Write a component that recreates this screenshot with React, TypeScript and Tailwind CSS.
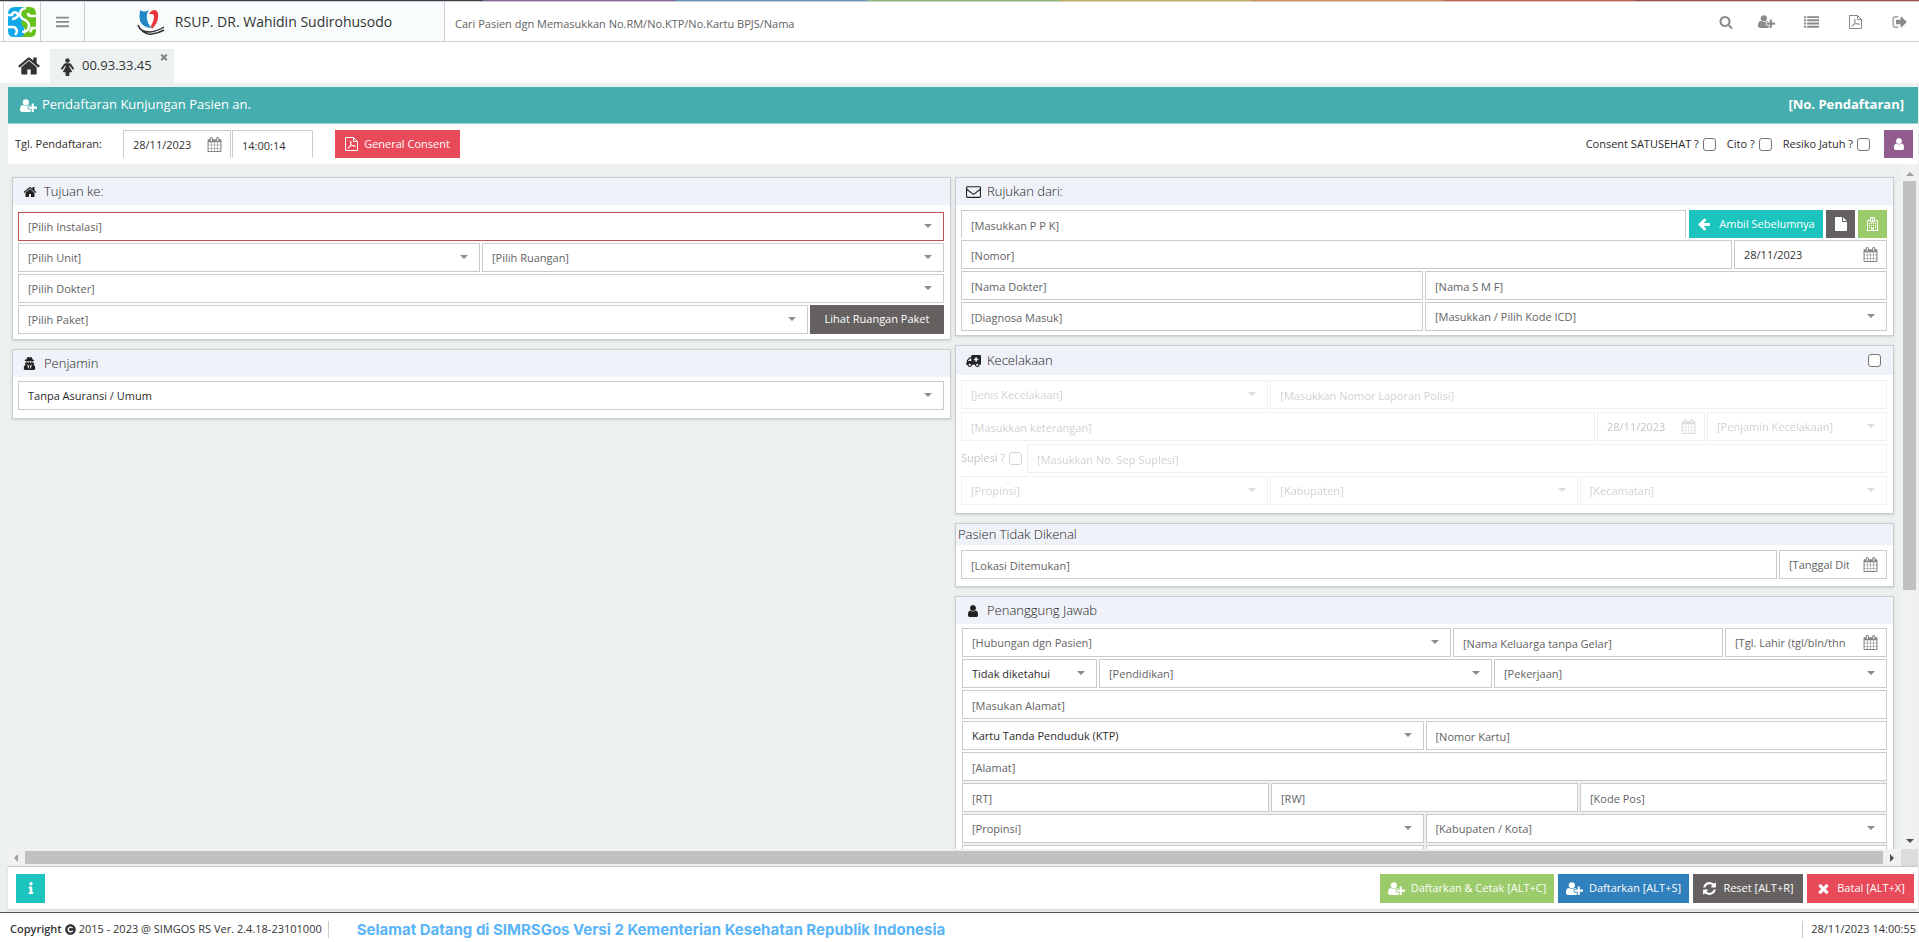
import { ReactNode } from "react";
import { clsx } from "clsx";
import { FaAmbulance, FaCopyright, FaInfo, FaUserSecret } from "react-icons/fa";

const ICONS = {
  calendar:
    "M192 1664h288v-288h-288v288zm352 0h320v-288h-320v288zm-352-352h288v-320h-288v320zm352 0h320v-320h-320v320zm-352-384h288v-288h-288v288zm736 736h320v-288h-320v288zm-384-736h320v-288h-320v288zm768 736h288v-288h-288v288zm-384-352h320v-320h-320v320zm-352-864v-288q0-13-9.500-22.500t-22.500-9.500h-64q-13 0-22.500 9.500t-9.500 22.500v288q0 13 9.500 22.500t22.500 9.500h64q13 0 22.500-9.500t9.500-22.500zm736 864h288v-320h-288v320zm-384-384h320v-288h-320v288zm384 0h288v-288h-288v288zm32-480v-288q0-13-9.500-22.500t-22.500-9.500h-64q-13 0-22.500 9.500t-9.500 22.500v288q0 13 9.500 22.500t22.500 9.500h64q13 0 22.500-9.500t9.500-22.500zm384-64v1280q0 52-38 90t-90 38h-1408q-52 0-90-38t-38-90v-1280q0-52 38-90t90-38h128v-96q0-66 47-113t113-47h64q66 0 113 47t47 113v96h384v-96q0-66 47-113t113-47h64q66 0 113 47t47 113v96h128q52 0 90 38t38 90z",
  signOut:
    "M704 1440q0 4 1 20t.5 26.500-3 23.500-10 19.500-20.500 6.500h-320q-119 0-203.500-84.500t-84.500-203.500v-704q0-119 84.500-203.500t203.500-84.500h320q13 0 22.500 9.500t9.500 22.500q0 4 1 20t.5 26.500-3 23.500-10 19.500-20.500 6.500h-320q-66 0-113 47t-47 113v704q0 66 47 113t113 47h312l11.500 1 11.500 3 8 5.500 7 9 2 13.500zm928-544q0 26-19 45l-544 544q-19 19-45 19t-45-19-19-45v-288h-448q-26 0-45-19t-19-45v-384q0-26 19-45t45-19h448v-288q0-26 19-45t45-19 45 19l544 544q19 19 19 45z",
  home: "M1472 992v480q0 26-19 45t-45 19h-384v-384h-256v384h-384q-26 0-45-19t-19-45v-480q0-1 .5-3t.5-3l575-474 575 474q1 2 1 6zm223-69l-62 74q-8 9-21 11h-3q-13 0-21-7l-692-577-692 577q-12 8-24 7-13-2-21-11l-62-74q-8-10-7-23.500t11-21.500l719-599q32-26 76-26t76 26l244 204v-195q0-14 9-23t23-9h192q14 0 23 9t9 23v408l219 182q10 8 11 21.500t-7 23.500z",
  search:
    "M1216 832q0-185-131.500-316.500t-316.500-131.500-316.500 131.500-131.500 316.500 131.500 316.500 316.500 131.500 316.500-131.500 131.500-316.500zm512 832q0 52-38 90t-90 38q-54 0-90-38l-343-342q-179 124-399 124-143 0-273.500-55.500t-225-150-150-225-55.500-273.500 55.500-273.500 150-225 225-150 273.500-55.500 273.500 55.500 225 150 150 225 55.500 273.500q0 220-124 399l343 343q37 37 37 90z",
  user: "M1536 1399q0 109-62.500 187t-150.500 78h-854q-88 0-150.500-78t-62.500-187q0-85 8.500-160.500t31.500-152 58.500-131 94-89 134.500-34.500q131 128 313 128t313-128q76 0 134.500 34.500t94 89 58.500 131 31.500 152 8.500 160.500zm-256-887q0 159-112.500 271.500t-271.500 112.500-271.500-112.500-112.500-271.500 112.500-271.500 271.500-112.500 271.500 112.500 112.500 271.500z",
  refresh:
    "M1639 1056q0 5-1 7-64 268-268 434.500t-478 166.500q-146 0-282.500-55t-243.500-157l-129 129q-19 19-45 19t-45-19-19-45v-448q0-26 19-45t45-19h448q26 0 45 19t19 45-19 45l-137 137q71 66 161 102t187 36q134 0 250-65t186-179q11-17 53-117 8-23 30-23h192q13 0 22.500 9.500t9.500 22.500zm25-800v448q0 26-19 45t-45 19h-448q-26 0-45-19t-19-45 19-45l138-138q-148-137-349-137-134 0-250 65t-186 179q-11 17-53 117-8 23-30 23h-199q-13 0-22.500-9.500t-9.500-22.500v-7q65-268 270-434.500t480-166.500q146 0 284 55.500t245 156.500l130-129q19-19 45-19t45 19 19 45z",
  times:
    "M1490 1322q0 40-28 68l-136 136q-28 28-68 28t-68-28l-294-294-294 294q-28 28-68 28t-68-28l-136-136q-28-28-28-68t28-68l294-294-294-294q-28-28-28-68t28-68l136-136q28-28 68-28t68 28l294 294 294-294q28-28 68-28t68 28l136 136q28 28 28 68t-28 68l-294 294 294 294q28 28 28 68z",
  arrowLeft:
    "M1664 896v128q0 53-32.500 90.500t-84.500 37.500h-704l293 294q38 36 38 90t-38 90l-75 76q-37 37-90 37-52 0-91-37l-651-652q-37-37-37-90 0-52 37-91l651-650q38-38 91-38 52 0 90 38l75 74q38 38 38 91t-38 91l-293 293h704q52 0 84.500 37.500t32.500 90.500z",
  file: "M1152 512v-472q22 14 36 28l408 408q14 14 28 36h-472zm-128 32q0 40 28 68t68 28h544v1056q0 40-28 68t-68 28h-1344q-40 0-68-28t-28-68v-1600q0-40 28-68t68-28h800v544z",
  envelope:
    "M1664 1504v-768q-32 36-69 66-268 206-426 338-51 43-83 67t-86.500 48.500-102.500 24.500h-2q-48 0-102.500-24.500t-86.500-48.500-83-67q-158-132-426-338-37-30-69-66v768q0 13 9.500 22.500t22.500 9.500h1472q13 0 22.500-9.500t9.500-22.500zm0-1051v-24.500l-.5-13-3-12.500-5.500-9-9-7.500-14-2.500h-1472q-13 0-22.500 9.500t-9.500 22.500q0 168 147 284 193 152 401 317 6 5 35 29.500t46 37.500 44.500 31.500 50.500 27.500 43 9h2q20 0 43-9t50.500-27.500 44.500-31.500 46-37.500 35-29.500q208-165 401-317 54-43 100.500-115.500t46.500-131.500zm128-37v1088q0 66-47 113t-113 47h-1472q-66 0-113-47t-47-113v-1088q0-66 47-113t113-47h1472q66 0 113 47t47 113z",
  list: "M0 256h256v224h-256zM384 256h1408v224h-1408zM0 640h256v224h-256zM384 640h1408v224h-1408zM0 1024h256v224h-256zM384 1024h1408v224h-1408zM0 1408h256v224h-256zM384 1408h1408v224h-1408z",
  bars: "M128 320h1536v224h-1536zM128 832h1536v224h-1536zM128 1344h1536v224h-1536z",
};

function Icon({ name, className }: { name: keyof typeof ICONS; className?: string }) {
  return (
    <svg viewBox="0 0 1792 1792" fill="currentColor" aria-hidden="true" className={clsx("shrink-0", className)}>
      <path d={ICONS[name]} />
    </svg>
  );
}

function UserPlus({ className }: { className?: string }) {
  return (
    <svg viewBox="0 0 2048 1792" fill="currentColor" aria-hidden="true" className={clsx("shrink-0", className)}>
      <path d="M704 896q-159 0-271.500-112.500t-112.500-271.500 112.500-271.500 271.500-112.500 271.500 112.500 112.500 271.500-112.500 271.500-271.500 112.500zm960 128h352q13 0 22.500 9.500t9.500 22.500v192q0 13-9.500 22.500t-22.500 9.500h-352v352q0 13-9.500 22.500t-22.500 9.500h-192q-13 0-22.500-9.500t-9.500-22.500v-352h-352q-13 0-22.500-9.500t-9.500-22.500v-192q0-13 9.500-22.500t22.500-9.500h352v-352q0-13 9.500-22.500t22.500-9.500h192q13 0 22.500 9.500t9.500 22.500v352zm-736 224q0 52 38 90t90 38h256v238q-68 50-171 50h-874q-121 0-194-69t-73-190q0-53 3.500-103.500t14-109 26.500-108.500 43-97.500 62-81 85.500-53.500 111.500-20q19 0 39 17 79 61 154.500 91.500t164.500 30.500 164.500-30.500 154.500-91.500q20-17 39-17 132 0 217 96h-223q-52 0-90 38t-38 90v192z" />
    </svg>
  );
}

function FemaleIcon({ className }: { className?: string }) {
  return (
    <svg viewBox="0 0 1280 1792" fill="currentColor" aria-hidden="true" className={clsx("shrink-0", className)}>
      <path d="M1280 1056q0 40-28 68t-68 28q-51 0-80-43l-227-341h-45v132l247 411q9 15 9 33 0 26-19 45t-45 19h-192v272q0 46-33 79t-79 33h-160q-46 0-79-33t-33-79v-272h-192q-26 0-45-19t-19-45q0-18 9-33l247-411v-132h-45l-227 341q-29 43-80 43-40 0-68-28t-28-68q0-29 16-53l256-384q73-107 176-107h384q103 0 176 107l256 384q16 24 16 53zM864 256q0 93-65.500 158.500t-158.500 65.500-158.500-65.500-65.500-158.500 65.500-158.500 158.500-65.500 158.500 65.500 65.500 158.500z" />
    </svg>
  );
}

function PdfIcon({ className }: { className?: string }) {
  return (
    <svg viewBox="0 0 13 14" fill="none" stroke="currentColor" aria-hidden="true" className={clsx("shrink-0", className)}>
      <path d="M.5.500h8l4 4v9H.5zM8.500.500v4h4" />
      <path d="M3 11.500q1-.2 2-2.300 1.300-2.700 1-4.700-.4-.8-.7 0 0 2.500 1.700 3.900 1.500 1.200 3.300 1 .4-.6-.6-.8-2.500-.2-5 .8-1.900.9-1.700 2.100z" strokeWidth=".8" />
    </svg>
  );
}

function HospitalIcon() {
  return (
    <svg viewBox="0 0 13 14" fill="none" stroke="currentColor" aria-hidden="true" className="h-[14px] w-[13px]">
      <path d="M4 3.500H1.500v10h10v-10H9M.5 13.500h12" />
      <path d="M4.500 5V.500h4V5z" />
      <path d="M6.500 1.500v3M5.500 3h2" />
      <path d="M3 6.500h7M3 8.500h7M3 10.500h7" strokeDasharray="1 1" />
      <path d="M5.500 13.500v-2h2v2" />
    </svg>
  );
}

function SimgosLogo() {
  return (
    <svg viewBox="0 0 28 30" aria-hidden="true" className="h-[30px] w-7">
      <path fill="#12a9ea" d="M7 0h9v30H6q-6 0-6-6V7q0-7 7-7z" />
      <path fill="#66c21a" d="M16 0h6q6 0 6 7v17q0 6-6 6h-9q4-2 4-6t-3-5l-1-5 5-1-3-3q-3-2-3-5 0-4 4-5z" />
      <path
        d="M18 1q-6 1-6 6 0 4 5 6 4 2 4 6 0 6-7 6M0 8h4q1-4 5-2 2 2 0 4-2 2-5 2M28 21h-4q-1 3-2 4M28 9h-5q-3 0-3-3M0 20h5q3 0 4 4 0 2-2 4"
        fill="none"
        stroke="#fff"
        strokeWidth="2.500"
      />
    </svg>
  );
}

function HospitalLogo() {
  return (
    <svg viewBox="0 0 28 26" aria-hidden="true" className="h-[26px] w-7">
      <path d="M3 1q4 3 9 0-3 4-2 9 1 6 5 9-9 0-12-7-1-5 0-11z" fill="#1f87c4" />
      <path d="M12 5q2-4 6-4 4 1 3 8-1 6-6 11-1-2-1-3 3-5 3-9 0-3-2-3t-3 0z" fill="#e8353b" />
      <path d="M1 16q2 7 12 7 8-1 14-5M5 22q5 4 10 3 7-1 12-4" fill="none" stroke="#333" strokeWidth="1.500" />
    </svg>
  );
}

function Caret() {
  return (
    <svg viewBox="0 0 8 4" fill="#8c8c8c" aria-hidden="true" className="pointer-events-none absolute top-3 right-3 h-1 w-2">
      <path d="M0 0h8l-4 4z" />
    </svg>
  );
}

const box = "h-[29px] border bg-white";
const gray = "border-[#cbcbcb]";

function SelectField({
  label,
  value,
  className = "flex-1",
  invalid,
  disabled,
}: {
  label: string;
  value?: string;
  className?: string;
  invalid?: boolean;
  disabled?: boolean;
}) {
  return (
    <div className={clsx("relative min-w-0", className)}>
      <select
        aria-label={label}
        disabled={disabled}
        className={clsx(
          "block w-full appearance-none pt-0.5 pr-7 pl-[9px] opacity-100",
          box,
          invalid ? "border-[#c0564f]" : gray,
          value ? "text-[#2b2b2b]" : "text-[#636363]",
        )}
      >
        <option>{value ?? label}</option>
      </select>
      <Caret />
    </div>
  );
}

function TextField({
  label,
  className = "flex-1",
  disabled,
}: {
  label: string;
  className?: string;
  disabled?: boolean;
}) {
  return (
    <div className={clsx("min-w-0", className)}>
      <input
        type="text"
        aria-label={label}
        placeholder={label}
        disabled={disabled}
        className={clsx("block w-full px-[9px] pt-px placeholder:text-[#636363]", box, gray)}
      />
    </div>
  );
}

function DateField({
  label,
  value,
  className,
  disabled,
}: {
  label: string;
  value?: string;
  className?: string;
  disabled?: boolean;
}) {
  return (
    <div className={clsx("flex items-center pr-2 pl-[9px]", box, gray, className)}>
      <input
        type="text"
        aria-label={label}
        placeholder={label}
        defaultValue={value}
        disabled={disabled}
        className="mr-[14px] w-0 flex-1 pt-0.5 text-[#333] placeholder:text-[#636363]"
      />
      <button type="button" aria-label={`Kalender ${label}`} disabled={disabled} className="text-[#858585]">
        <Icon name="calendar" className="size-[15px]" />
      </button>
    </div>
  );
}

const tick = "size-[13px] shrink-0 appearance-none rounded-[3px] border border-[#767676] bg-white";

function Check({ label }: { label: string }) {
  return (
    <label className="flex items-center gap-1 text-[#2b2b2b]">
      {label}
      <input type="checkbox" className={tick} />
    </label>
  );
}

function Panel({
  title,
  icon,
  extra,
  headClass = "h-[27px] pl-[10px]",
  bodyClass = "pl-[5px]",
  children,
}: {
  title: string;
  icon?: ReactNode;
  extra?: ReactNode;
  headClass?: string;
  bodyClass?: string;
  children: ReactNode;
}) {
  return (
    <section className="border border-[#c9cecd] bg-white shadow-sm">
      <header className={clsx("flex items-center bg-[#eff2f8] pr-3 text-[#222]", headClass)}>
        {icon && <span className="flex w-[21px] items-center">{icon}</span>}
        <h2 className="flex-1 text-[13px] font-light">{title}</h2>
        {extra}
      </header>
      <div className={clsx("flex flex-col pr-1.5", bodyClass)}>{children}</div>
    </section>
  );
}

function Row({ children }: { children: ReactNode }) {
  return <div className="flex items-center gap-0.5">{children}</div>;
}

function ActionButton({ icon, label, className }: { icon?: ReactNode; label?: string; className: string }) {
  return (
    <button type="button" className={clsx("flex shrink-0 items-center justify-center gap-1.5 text-white", className)}>
      {icon}
      {label}
    </button>
  );
}

function TopBar() {
  return (
    <>
      <div className="flex h-px shrink-0">
        <i className="w-[483px] bg-[#3e3d49]" />
        <i className="flex-1 bg-[#83629b]" />
        <i className="flex-1 bg-[#6394c4]" />
        <i className="flex-1 bg-[#84bb6c]" />
        <i className="flex-1 bg-[#c9b04f]" />
        <i className="flex-1 bg-[#d38d4c]" />
        <i className="flex-1 bg-[#c9604f]" />
        <i className="w-[284px] bg-[#a9474d]" />
      </div>
      <div className="flex h-[41px] shrink-0 border-y border-[#cbcdce] bg-white pl-[3px]">
        <a href="#" aria-label="SIMGOS" className="flex w-[38px] items-center justify-center border-x border-[#cbcdce]">
          <SimgosLogo />
        </a>
        <button type="button" aria-label="Menu" className="flex w-[44px] items-center justify-center border-r border-[#cbcdce] bg-[#f8fcfd] text-[#8a8a8a]">
          <Icon name="bars" className="size-[15px]" />
        </button>
        <div className="flex w-[360px] items-center justify-center gap-[10px] border-r border-[#cbcdce] bg-[#f8fcfd]">
          <HospitalLogo />
          <span className="text-[14px] text-[#333]">RSUP. DR. Wahidin Sudirohusodo</span>
        </div>
        <input
          type="search"
          aria-label="Cari pasien"
          placeholder="Cari Pasien dgn Memasukkan No.RM/No.KTP/No.Kartu BPJS/Nama"
          className="flex-1 px-[10px] pt-1.5 placeholder:text-[#636363]"
        />
        <nav className="flex items-center gap-[29px] pr-[11px] text-[#8a8a8a]">
          <button type="button" aria-label="Cari" className="-mr-1">
            <Icon name="search" className="size-[14px]" />
          </button>
          <button type="button" aria-label="Pasien baru">
            <UserPlus className="h-[15px] w-[17px]" />
          </button>
          <button type="button" aria-label="Daftar">
            <Icon name="list" className="size-[15px]" />
          </button>
          <button type="button" aria-label="PDF" className="px-px">
            <PdfIcon className="h-[14px] w-[13px]" />
          </button>
          <button type="button" aria-label="Keluar">
            <Icon name="signOut" className="size-4" />
          </button>
        </nav>
      </div>
    </>
  );
}

function TabBar() {
  return (
    <div className="flex h-[41px] shrink-0 items-end bg-white pl-[17px] text-[#333]">
      <a href="#" aria-label="Beranda" className="mr-[9px] flex h-[34px] items-center">
        <Icon name="home" className="size-6" />
      </a>
      <a href="#" className="flex h-[34px] w-[124px] bg-[#edf1f1] pr-[5px] pl-[11px]">
        <FemaleIcon className="mt-[9px] h-[18px] w-[13px]" />
        <span className="flex-1 pt-1.5 pl-2 text-[13px] leading-5">00.93.33.45</span>
        <Icon name="times" className="mt-[3px] size-[10px] text-[#858585]" />
      </a>
    </div>
  );
}

function LeftColumn() {
  return (
    <div className="flex flex-col gap-[9px]">
      <Panel title="Tujuan ke:" icon={<Icon name="home" className="size-[14px]" />} bodyClass="gap-0.5 pt-[7px] pb-[5px] pl-[5px]">
        <SelectField label="[Pilih Instalasi]" invalid className="w-full" />
        <Row>
          <SelectField label="[Pilih Unit]" />
          <SelectField label="[Pilih Ruangan]" />
        </Row>
        <SelectField label="[Pilih Dokter]" className="w-full" />
        <Row>
          <SelectField label="[Pilih Paket]" />
          <ActionButton label="Lihat Ruangan Paket" className="h-[29px] w-[134px] bg-[#656161]" />
        </Row>
      </Panel>
      <Panel title="Penjamin" icon={<FaUserSecret className="size-[13px]" />} bodyClass="pt-1 pb-2 pl-[5px]">
        <SelectField label="Penjamin" value="Tanpa Asuransi / Umum" className="w-full" />
      </Panel>
    </div>
  );
}

function RightColumn() {
  return (
    <div className="flex flex-col gap-[9px]">
      <Panel title="Rujukan dari:" icon={<Icon name="envelope" className="size-[15px]" />} bodyClass="gap-0.5 pt-[5px] pb-1 pl-[5px]">
        <div className="flex h-7 items-start gap-[3px] overflow-hidden">
          <TextField label="[Masukkan P P K]" />
          <ActionButton icon={<Icon name="arrowLeft" className="mr-0.5 size-[14px]" />} label="Ambil Sebelumnya" className="h-7 w-[134px] bg-[#1bc5bd]" />
          <ActionButton icon={<Icon name="file" className="size-[14px]" />} className="h-7 w-[29px] bg-[#656161]" />
          <ActionButton icon={<HospitalIcon />} className="h-7 w-[29px] bg-[#9bcb6a]" />
        </div>
        <Row>
          <TextField label="[Nomor]" />
          <DateField label="Tanggal rujukan" value="28/11/2023" className="w-[153px]" />
        </Row>
        <Row>
          <TextField label="[Nama Dokter]" />
          <TextField label="[Nama S M F]" />
        </Row>
        <Row>
          <TextField label="[Diagnosa Masuk]" />
          <SelectField label="[Masukkan / Pilih Kode ICD]" />
        </Row>
      </Panel>

      <Panel
        title="Kecelakaan"
        headClass="h-[29px] pl-[10px]"
        icon={<FaAmbulance className="h-[14px] w-[15px] -scale-x-100" />}
        extra={<input type="checkbox" aria-label="Kecelakaan" className={tick} />}
        bodyClass="pt-[5px] pb-2 pl-[5px]"
      >
        <div className="flex flex-col gap-[3px] opacity-30">
          <div className="grid grid-cols-3 gap-0.5">
            <SelectField label="[Jenis Kecelakaan]" disabled className="col-span-1" />
            <TextField label="[Masukkan Nomor Laporan Polisi]" disabled className="col-span-2" />
          </div>
          <Row>
            <TextField label="[Masukkan keterangan]" disabled />
            <DateField label="Tanggal kejadian" value="28/11/2023" disabled className="w-[108px]" />
            <SelectField label="[Penjamin Kecelakaan]" disabled className="w-[180px]" />
          </Row>
          <Row>
            <label className="mr-[3px] flex items-center gap-1 text-[#333]">
              Suplesi ?
              <input type="checkbox" disabled className={tick} />
            </label>
            <TextField label="[Masukkan No. Sep Suplesi]" disabled />
          </Row>
          <Row>
            <SelectField label="[Propinsi]" disabled />
            <SelectField label="[Kabupaten]" disabled />
            <SelectField label="[Kecamatan]" disabled />
          </Row>
        </div>
      </Panel>

      <Panel title="Pasien Tidak Dikenal" headClass="h-[21px] pl-0.5" bodyClass="pt-[5px] pb-[7px] pl-[5px]">
        <Row>
          <TextField label="[Lokasi Ditemukan]" />
          <DateField label="[Tanggal Ditemukan]" className="w-[108px]" />
        </Row>
      </Panel>

      <Panel title="Penanggung Jawab" icon={<Icon name="user" className="size-[14px]" />} bodyClass="gap-0.5 pt-1 pl-1.5">
        <Row>
          <SelectField label="[Hubungan dgn Pasien]" />
          <TextField label="[Nama Keluarga tanpa Gelar]" className="w-[270px]" />
          <DateField label="[Tgl. Lahir (tgl/bln/thn" className="w-[162px]" />
        </Row>
        <Row>
          <SelectField label="Status" value="Tidak diketahui" className="w-[135px]" />
          <SelectField label="[Pendidikan]" />
          <SelectField label="[Pekerjaan]" />
        </Row>
        <TextField label="[Masukan Alamat]" className="w-full" />
        <Row>
          <SelectField label="Jenis kartu" value="Kartu Tanda Penduduk (KTP)" />
          <TextField label="[Nomor Kartu]" />
        </Row>
        <div className="flex flex-col gap-0.5 bg-[#edf1f1]">
          <TextField label="[Alamat]" className="w-full" />
          <Row>
            <TextField label="[RT]" />
            <TextField label="[RW]" />
            <TextField label="[Kode Pos]" />
          </Row>
          <Row>
            <SelectField label="[Propinsi]" />
            <SelectField label="[Kabupaten / Kota]" />
          </Row>
          <Row>
            <SelectField label="[Kecamatan]" />
            <SelectField label="[Kelurahan]" />
          </Row>
        </div>
      </Panel>
    </div>
  );
}

export default function App() {
  return (
    <div className="flex h-screen flex-col overflow-hidden bg-[#ecf0ef] font-['Open_Sans',sans-serif] text-[11px]">
      <TopBar />
      <TabBar />

      <main className="mt-1 mr-px ml-2 flex min-h-0 flex-1 flex-col">
        <div className="flex h-[37px] shrink-0 items-center border-b border-[#9fc9c9] bg-[#46adae] pr-[14px] pl-3 text-[13px] text-white">
          <UserPlus className="mr-[5px] h-[15px] w-[17px]" />
          <h1 className="flex-1">Pendaftaran Kunjungan Pasien an.</h1>
          <strong className="font-bold">[No. Pendaftaran]</strong>
        </div>

        <div className="flex h-10 shrink-0 items-center bg-white pr-[5px] pl-[7px]">
          <span className="w-[108px] text-[#2b2b2b]">Tgl. Pendaftaran:</span>
          <div className="flex h-7 items-start gap-px overflow-hidden">
            <DateField label="Tanggal pendaftaran" value="28/11/2023" className="w-[108px]" />
            <input
              type="text"
              aria-label="Jam pendaftaran"
              defaultValue="14:00:14"
              className={clsx("w-[81px] pt-0.5 pl-[9px] text-[#333]", box, gray)}
            />
          </div>
          <ActionButton
            icon={<PdfIcon className="h-[14px] w-[13px]" />}
            label="General Consent"
            className="ml-[22px] h-7 w-[125px] bg-[#e84a5a]"
          />
          <div className="ml-auto flex items-center gap-[11px]">
            <Check label="Consent SATUSEHAT ?" />
            <Check label="Cito ?" />
            <Check label="Resiko Jatuh ?" />
          </div>
          <ActionButton icon={<Icon name="user" className="size-[14px]" />} className="ml-[14px] h-7 w-[29px] bg-[#915d8f]" />
        </div>

        <div className="flex min-h-0 flex-1">
          <div className="grid flex-1 grid-cols-2 items-start gap-1 overflow-hidden pt-[13px] pr-[7px] pl-1">
            <LeftColumn />
            <RightColumn />
          </div>
          {/* vertical scroll bar */}
          <div className="flex w-[17px] flex-col items-center bg-[#f1f1f1] pt-2 pb-[6px]">
            <svg viewBox="0 0 8 4" className="h-1 w-2" fill="#a0a0a0" aria-hidden="true">
              <path d="M0 4h8l-4-4z" />
            </svg>
            <div className="mt-[5px] h-[61%] w-[13px] bg-[#c1c1c1]" />
            <svg viewBox="0 0 8 4" className="mt-auto h-1 w-2" fill="#505050" aria-hidden="true">
              <path d="M0 0h8l-4 4z" />
            </svg>
          </div>
        </div>

        {/* horizontal scroll bar */}
        <div className="flex h-[17px] shrink-0 items-center bg-[#f1f1f1] pl-[6px]">
          <svg viewBox="0 0 4 8" className="h-2 w-1" fill="#a0a0a0" aria-hidden="true">
            <path d="M4 0v8l-4-4z" />
          </svg>
          <div className="mx-[7px] h-[13px] flex-1 bg-[#c1c1c1]" />
          <svg viewBox="0 0 4 8" className="mr-[7px] h-2 w-1" fill="#505050" aria-hidden="true">
            <path d="M0 0v8l4-4z" />
          </svg>
          <div className="h-full w-[17px] bg-[#dcdcdc]" />
        </div>

        <div className="mb-[3px] flex h-[43px] shrink-0 items-center gap-1 border-t border-[#cbcdce] bg-white pr-1 pl-2 shadow-sm">
          <ActionButton icon={<FaInfo className="size-[12px]" />} className="mr-auto h-[29px] w-[29px] bg-[#1bc5bd]" />
          <ActionButton
            icon={<UserPlus className="h-[15px] w-[17px]" />}
            label="Daftarkan & Cetak [ALT+C]"
            className="h-[29px] w-[174px] bg-[#9bcb6a]"
          />
          <ActionButton
            icon={<UserPlus className="h-[15px] w-[17px]" />}
            label="Daftarkan [ALT+S]"
            className="h-[29px] w-[131px] bg-[#2f80bc]"
          />
          <ActionButton
            icon={<Icon name="refresh" className="size-[15px]" />}
            label="Reset [ALT+R]"
            className="h-[29px] w-[110px] bg-[#656161]"
          />
          <ActionButton
            icon={<Icon name="times" className="size-[15px]" />}
            label="Batal [ALT+X]"
            className="h-[29px] w-[107px] bg-[#e84a5a]"
          />
        </div>
      </main>

      <footer className="flex h-[30px] shrink-0 items-center border-t border-[#5d4f4b] bg-white px-[3px] pt-1 pl-[10px] text-[#333]">
        <span className="flex items-center gap-[3px] border-r border-[#cbcdce] pr-[6px]">
          <span className="font-semibold">Copyright</span>
          <FaCopyright className="size-[11px]" />
          2015 - 2023 @ SIMGOS RS Ver. 2.4.18-23101000
        </span>
        <span className="ml-7 flex-1 font-['Inter',sans-serif] text-[15px] leading-4 font-bold text-[#5ab4f8]">
          Selamat Datang di SIMRSGos Versi 2 Kementerian Kesehatan Republik Indonesia
        </span>
        <time className="border-l border-[#cbcdce] pl-2">28/11/2023 14:00:55</time>
      </footer>
    </div>
  );
}
